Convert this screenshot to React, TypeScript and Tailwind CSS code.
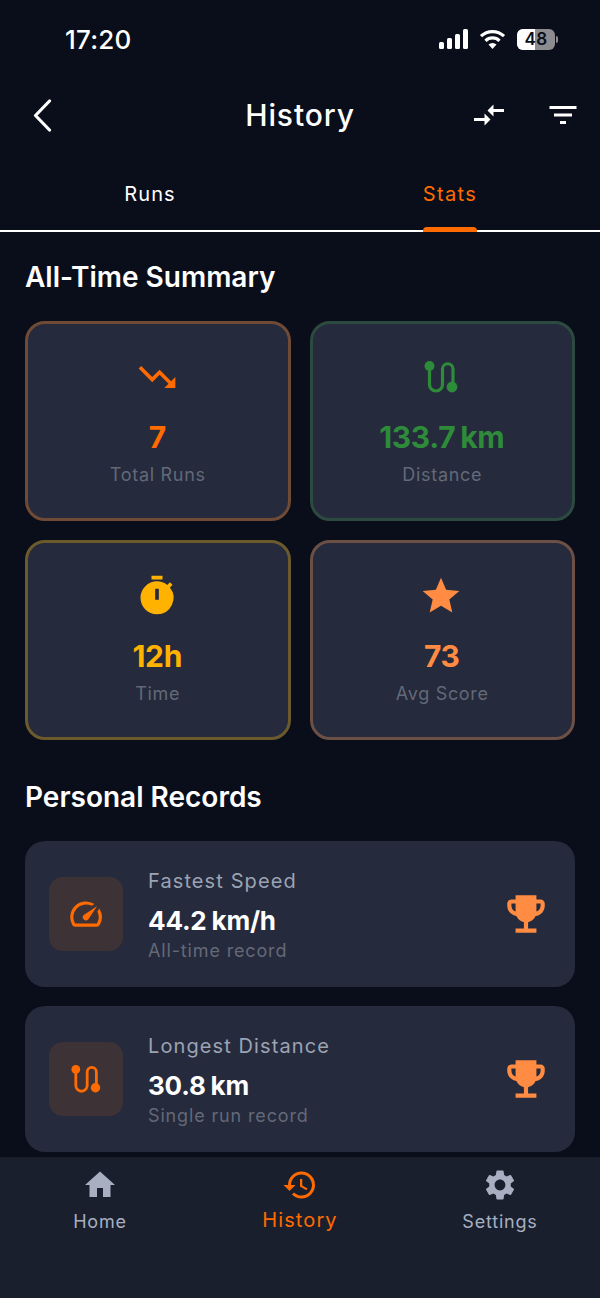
import { ReactNode } from "react";
import {
  MdTrendingDown,
  MdTimer,
  MdStar,
  MdOutlineSpeed,
  MdEmojiEvents,
  MdHome,
  MdHistory,
  MdSettings,
  MdCompareArrows,
  MdFilterList,
} from "react-icons/md";

const FONT = "font-['Inter','Liberation_Sans',sans-serif]";

function RouteIcon({ height, className }: { height: number; className?: string }) {
  return (
    <svg width={(height * 34) / 32} height={height} viewBox="0 0 34 32" className={className} fill="none">
      <path
        d="M5.5 5V23.5a6.5 6.5 0 0 0 13 0V8a5.25 5.25 0 0 1 10.5 0V26"
        stroke="currentColor"
        strokeWidth="3.2"
      />
      <circle cx="5.5" cy="5" r="5" fill="currentColor" />
      <circle cx="28" cy="26" r="5.4" fill="currentColor" />
    </svg>
  );
}

function StatusBar() {
  return (
    <div className="h-[78px] shrink-0 flex items-center justify-between pl-[65px] pr-[42px]">
      <span className="text-[26px] font-medium text-white tracking-[0.2px]">17:20</span>
      <div className="flex items-center gap-[10px]">
        <svg width="30" height="20" viewBox="0 0 30 20" fill="white">
          <rect x="0" y="13" width="5" height="7" rx="1.5" />
          <rect x="8" y="9" width="5" height="11" rx="1.5" />
          <rect x="16" y="5" width="5" height="15" rx="1.5" />
          <rect x="24" y="0" width="5" height="20" rx="1.5" />
        </svg>
        <svg width="27" height="20" viewBox="0 0 26 20" fill="none" stroke="white" strokeWidth="3.2">
          <path d="M1.5 7.2a16.5 16.5 0 0 1 23 0" />
          <path d="M6 11.8a10 10 0 0 1 14 0" />
          <path d="M13 20l-4-4.4a5.6 5.6 0 0 1 8 0z" fill="white" stroke="none" />
        </svg>
        <div className="flex items-center gap-[1px] ml-[1px]">
          <div className="relative w-[38px] h-[21px] rounded-[6px] overflow-hidden bg-[#8b8b90] flex items-center justify-center">
            <div className="absolute left-0 top-0 bottom-0 w-[18px] bg-white" />
            <span className="relative text-[17px] leading-none font-semibold text-[#0a0e1a] tracking-[0.5px]">48</span>
          </div>
          <div className="w-[2px] h-[7px] rounded-r-full bg-[#8b8b90]" />
        </div>
      </div>
    </div>
  );
}

function Header() {
  return (
    <div className="h-[74px] shrink-0 grid grid-cols-[1fr_auto_1fr] items-center px-[19px]">
      <svg width="28" height="34" viewBox="0 0 28 34" className="ml-[11px]" fill="none" stroke="white" strokeWidth="3.2" strokeLinecap="round" strokeLinejoin="round">
        <path d="M19.5 3L5.5 17.5 19.5 32" />
      </svg>
      <h1 className="text-center text-[30px] font-medium text-white tracking-[0.9px]">History</h1>
      <div className="flex items-center justify-end gap-[38px]">
        <MdCompareArrows size={36} className="text-white" />
        <MdFilterList size={36} className="text-white" />
      </div>
    </div>
  );
}

function Tabs() {
  return (
    <div className="h-[80px] shrink-0 flex border-b-2 border-white">
      <div className="flex-1 flex items-center justify-center pt-[6px]">
        <span className="text-[20px] text-white tracking-[1.1px]">Runs</span>
      </div>
      <div className="flex-1 flex items-center justify-center relative pt-[6px]">
        <span className="text-[20px] text-[#ff6b00] tracking-[1.4px]">Stats</span>
        <div className="absolute bottom-[-2px] left-1/2 -translate-x-1/2 w-[54px] h-[5px] rounded-t-[4px] bg-[#ff6b00]" />
      </div>
    </div>
  );
}

function StatCard({
  icon,
  value,
  label,
  valueColor,
  borderColor,
}: {
  icon: ReactNode;
  value: string;
  label: string;
  valueColor: string;
  borderColor: string;
}) {
  return (
    <div className={`h-[200px] rounded-[20px] border-[3px] bg-[#252a3c] flex flex-col items-center pt-[29px] ${borderColor}`}>
      <div className={`h-[48px] flex items-center justify-center pr-[2px] ${valueColor}`}>{icon}</div>
      <div className={`mt-[16px] pr-[1px] text-[30px] leading-[40px] font-bold tracking-[-0.3px] [word-spacing:-2px] ${valueColor}`}>{value}</div>
      <div className="mt-[6px] text-[18px] leading-[24px] text-[#636978] tracking-[0.7px]">{label}</div>
    </div>
  );
}

function RecordCard({
  icon,
  title,
  value,
  note,
}: {
  icon: ReactNode;
  title: string;
  value: string;
  note: string;
}) {
  return (
    <div className="h-[146px] rounded-[20px] bg-[#252a3c] flex items-center px-[24px]">
      <div className="w-[74px] h-[74px] rounded-[14px] bg-[#3d3336] flex items-center justify-center text-[#ff6b00] shrink-0">
        {icon}
      </div>
      <div className="flex-1 ml-[25px] pt-[2px]">
        <div className="text-[20px] leading-[28px] text-[#9ca3b4] tracking-[1.1px]">{title}</div>
        <div className="mt-[8px] text-[26px] leading-[36px] font-bold text-white tracking-[-0.2px] [word-spacing:-1px]">{value}</div>
        <div className="text-[18px] leading-[24px] text-[#636978] tracking-[0.85px]">{note}</div>
      </div>
      <MdEmojiEvents size={50} className="text-[#ff8c42] shrink-0" />
    </div>
  );
}

function NavItem({ icon, label, active }: { icon: ReactNode; label: string; active?: boolean }) {
  return (
    <div className={`flex-1 flex flex-col items-center ${active ? "text-[#ff6b00]" : "text-[#a8afc0]"}`}>
      <div className="h-[40px] flex items-center justify-center">{icon}</div>
      <span className={`${active ? "text-[20px] leading-[28px] mt-[1px] tracking-[1.1px]" : "text-[18px] leading-[28px] mt-[3px] tracking-[0.8px]"}`}>
        {label}
      </span>
    </div>
  );
}

export default function App() {
  return (
    <div className={`${FONT} w-[600px] h-[1298px] bg-[#0a0e1a] flex flex-col overflow-hidden`}>
      <StatusBar />
      <Header />
      <Tabs />
      <main className="flex-1 min-h-0 overflow-hidden px-[25px]">
        <h2 className="mt-[25px] text-[28px] leading-[40px] font-semibold text-white">All-Time Summary</h2>
        <div className="mt-[24px] grid grid-cols-2 gap-[19px]">
          <StatCard
            icon={<MdTrendingDown size={44} />}
            value="7"
            label="Total Runs"
            valueColor="text-[#ff6b00]"
            borderColor="border-[#6f4a35]"
          />
          <StatCard
            icon={<RouteIcon height={32} />}
            value="133.7 km"
            label="Distance"
            valueColor="text-[#2e8b3a]"
            borderColor="border-[#2d4a40]"
          />
          <StatCard
            icon={<MdTimer size={44} />}
            value="12h"
            label="Time"
            valueColor="text-[#ffb300]"
            borderColor="border-[#6b5a2c]"
          />
          <StatCard
            icon={<MdStar size={44} />}
            value="73"
            label="Avg Score"
            valueColor="text-[#ff8c42]"
            borderColor="border-[#6c4f45]"
          />
        </div>
        <h2 className="mt-[37px] text-[28px] leading-[40px] font-semibold text-white">Personal Records</h2>
        <div className="mt-[24px] flex flex-col gap-[19px]">
          <RecordCard icon={<MdOutlineSpeed size={38} />} title="Fastest Speed" value="44.2 km/h" note="All-time record" />
          <RecordCard icon={<RouteIcon height={28} />} title="Longest Distance" value="30.8 km" note="Single run record" />
        </div>
      </main>
      <nav className="h-[141px] shrink-0 bg-[#1a1f2e] flex items-start pt-[8px]">
        <NavItem icon={<MdHome size={36} />} label="Home" />
        <NavItem icon={<MdHistory size={36} />} label="History" active />
        <NavItem icon={<MdSettings size={36} />} label="Settings" />
      </nav>
    </div>
  );
}
